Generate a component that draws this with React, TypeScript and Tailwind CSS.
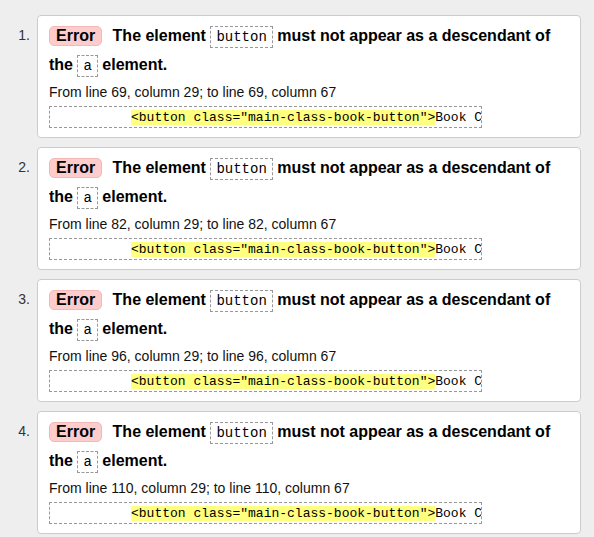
import React from 'react';

const ERRORS = [
  { n: 1, line: 69 },
  { n: 2, line: 82 },
  { n: 3, line: 96 },
  { n: 4, line: 110 },
];

function Code({ children }: { children: React.ReactNode }) {
  return (
    <code className="inline-block border border-dashed border-[#999] bg-white px-[5px] py-0 align-middle text-[14px] font-normal leading-[20px] text-[#000] [font-family:'Liberation_Mono',monospace]">
      {children}
    </code>
  );
}

function ErrorCard({ n, line }: { n: number; line: number }) {
  return (
    <li className="flex">
      <span className="w-[30px] shrink-0 pt-[6px] text-right text-[14px] leading-[29px] text-[#333]">{n}.</span>
      <div className="ml-[7px] h-[123px] flex-1 rounded-[4px] border border-[#ccc] bg-white pl-[11px] pr-[24px] pt-[5px] pb-[9px]">
        <p className="text-[16px] font-bold leading-[29px] text-black">
          <span className="mr-[6px] inline-block rounded-[5px] border border-[#f2b8b8] bg-[#ffcccc] px-[6px] leading-[18px]">
            Error
          </span>{' '}
          The element <Code>button</Code> must not appear as a descendant of the <Code>a</Code> element.
        </p>
        <p className="mt-[4px] text-[14px] leading-[18px] text-[#111]">
          From line {line}, column 29; to line {line}, column 67
        </p>
        <pre className="mt-[5px] h-[22px] w-[433px] overflow-hidden whitespace-pre border border-dashed border-[#999] pl-[3px] pt-[1px] text-[13px] leading-[19px] text-black [font-family:'Liberation_Mono',monospace]">
          {'          '}
          <span className="bg-[#ffff80]">&lt;button class="main-class-book-button"&gt;</span>Book C
        </pre>
      </div>
    </li>
  );
}

export default function App() {
  return (
    <div className="min-h-[537px] bg-[#eeeeee] pr-[13px] pt-[15px] [font-family:'Liberation_Sans',Arial,sans-serif]">
      <ol className="flex flex-col gap-[9px]">
        {ERRORS.map(e => (
          <ErrorCard key={e.n} n={e.n} line={e.line} />
        ))}
      </ol>
    </div>
  );
}
